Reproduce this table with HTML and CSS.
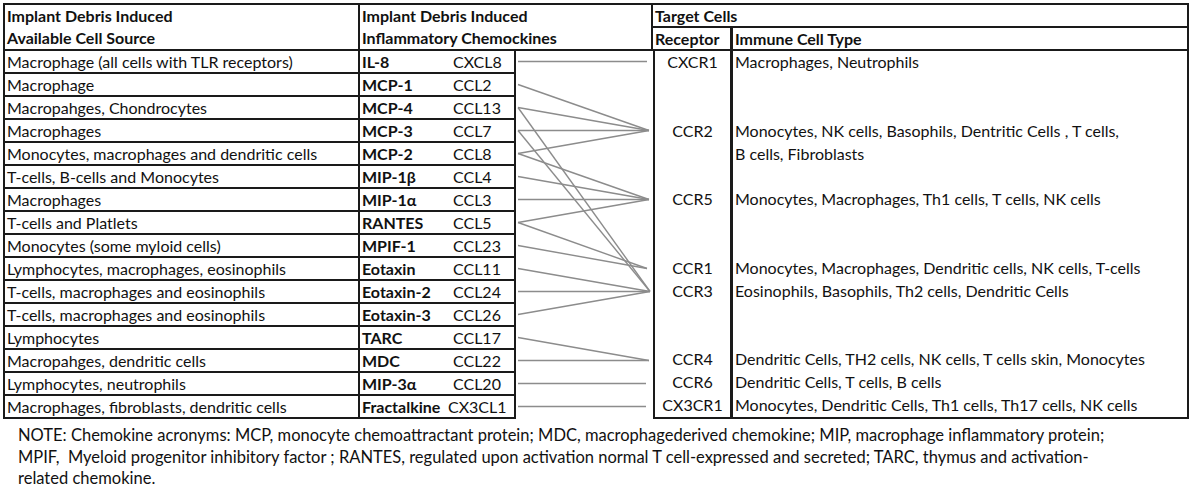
FILE: index.html
```html
<!DOCTYPE html>
<html lang="en">
<head>
    <meta charset="UTF-8">
    <title>Implant Debris Induced Chemokines</title>
    <link rel="stylesheet" href="styles.css">
</head>
<body>
    <div class="chart">
        <div class="hd hd-src">Implant Debris Induced<br>Available Cell Source</div>
        <div class="hd hd-chem">Implant Debris Induced<br>Inflammatory Chemockines</div>
        <div class="hd hd-target">Target Cells</div>
        <div class="hd hd-rec">Receptor</div>
        <div class="hd hd-imm">Immune Cell Type</div>

        <div class="src">Macrophage (all cells with TLR receptors)</div>
        <div class="chem"><b>IL-8</b><span>CXCL8</span></div>
        <div class="src">Macrophage</div>
        <div class="chem"><b>MCP-1</b><span>CCL2</span></div>
        <div class="src">Macropahges, Chondrocytes</div>
        <div class="chem"><b>MCP-4</b><span>CCL13</span></div>
        <div class="src">Macrophages</div>
        <div class="chem"><b>MCP-3</b><span>CCL7</span></div>
        <div class="src">Monocytes, macrophages and dendritic cells</div>
        <div class="chem"><b>MCP-2</b><span>CCL8</span></div>
        <div class="src">T-cells, B-cells and Monocytes</div>
        <div class="chem"><b>MIP-1β</b><span>CCL4</span></div>
        <div class="src">Macrophages</div>
        <div class="chem"><b>MIP-1α</b><span>CCL3</span></div>
        <div class="src">T-cells and Platlets</div>
        <div class="chem"><b>RANTES</b><span>CCL5</span></div>
        <div class="src">Monocytes (some myloid cells)</div>
        <div class="chem"><b>MPIF-1</b><span>CCL23</span></div>
        <div class="src">Lymphocytes, macrophages, eosinophils</div>
        <div class="chem"><b>Eotaxin</b><span>CCL11</span></div>
        <div class="src">T-cells, macrophages and eosinophils</div>
        <div class="chem"><b>Eotaxin-2</b><span>CCL24</span></div>
        <div class="src">T-cells, macrophages and eosinophils</div>
        <div class="chem"><b>Eotaxin-3</b><span>CCL26</span></div>
        <div class="src">Lymphocytes</div>
        <div class="chem"><b>TARC</b><span>CCL17</span></div>
        <div class="src">Macropahges, dendritic cells</div>
        <div class="chem"><b>MDC</b><span>CCL22</span></div>
        <div class="src">Lymphocytes, neutrophils</div>
        <div class="chem"><b>MIP-3α</b><span>CCL20</span></div>
        <div class="src">Macrophages, fibroblasts, dendritic cells</div>
        <div class="chem chem-wide"><b>Fractalkine</b><span>CX3CL1</span></div>

        <!-- chemokine -> receptor links, one row = 23px -->
        <svg class="links" width="137" height="368" viewBox="0 0 137 368">
            <g stroke="#8c8c8c" stroke-width="1.4" fill="none">
                <line x1="2" y1="10.5" x2="131" y2="10.5"/>
                <line x1="2" y1="33.5" x2="133" y2="79.5"/>
                <line x1="2" y1="56.5" x2="133" y2="79.5"/>
                <line x1="2" y1="56.5" x2="134" y2="240.5"/>
                <line x1="2" y1="79.5" x2="133" y2="79.5"/>
                <line x1="2" y1="79.5" x2="134" y2="240.5"/>
                <line x1="2" y1="102.5" x2="133" y2="79.5"/>
                <line x1="2" y1="102.5" x2="133" y2="148.5"/>
                <line x1="2" y1="125.5" x2="133" y2="148.5"/>
                <line x1="2" y1="148.5" x2="133" y2="148.5"/>
                <line x1="2" y1="171.5" x2="133" y2="148.5"/>
                <line x1="2" y1="171.5" x2="131" y2="217.5"/>
                <line x1="2" y1="194.5" x2="131" y2="217.5"/>
                <line x1="2" y1="217.5" x2="134" y2="240.5"/>
                <line x1="2" y1="240.5" x2="134" y2="240.5"/>
                <line x1="2" y1="263.5" x2="134" y2="240.5"/>
                <line x1="2" y1="286.5" x2="133" y2="309.5"/>
                <line x1="2" y1="309.5" x2="133" y2="309.5"/>
                <line x1="2" y1="332.5" x2="130" y2="332.5"/>
                <line x1="2" y1="355.5" x2="130" y2="355.5"/>
            </g>
        </svg>

        <div class="targets">
            <div class="rec">CXCR1</div><div class="imm">Macrophages, Neutrophils</div>
            <div class="rec"></div><div class="imm"></div>
            <div class="rec"></div><div class="imm"></div>
            <div class="rec">CCR2</div><div class="imm">Monocytes, NK cells, Basophils, Dentritic Cells , T cells,</div>
            <div class="rec"></div><div class="imm">B cells, Fibroblasts</div>
            <div class="rec"></div><div class="imm"></div>
            <div class="rec">CCR5</div><div class="imm">Monocytes, Macrophages, Th1 cells, T cells, NK cells</div>
            <div class="rec"></div><div class="imm"></div>
            <div class="rec"></div><div class="imm"></div>
            <div class="rec">CCR1</div><div class="imm">Monocytes, Macrophages, Dendritic cells, NK cells, T-cells</div>
            <div class="rec">CCR3</div><div class="imm">Eosinophils, Basophils, Th2 cells, Dendritic Cells</div>
            <div class="rec"></div><div class="imm"></div>
            <div class="rec"></div><div class="imm"></div>
            <div class="rec">CCR4</div><div class="imm">Dendritic Cells, TH2 cells, NK cells, T cells skin, Monocytes</div>
            <div class="rec">CCR6</div><div class="imm">Dendritic Cells, T cells, B cells</div>
            <div class="rec">CX3CR1</div><div class="imm">Monocytes, Dendritic Cells, Th1 cells, Th17 cells, NK cells</div>
        </div>
    </div>

    <p class="note">NOTE: Chemokine acronyms: MCP, monocyte chemoattractant protein; MDC, macrophagederived chemokine; MIP, macrophage inflammatory protein;<br>MPIF,&nbsp; Myeloid progenitor inhibitory factor ; RANTES, regulated upon activation normal T cell-expressed and secreted; TARC, thymus and activation-<br>related chemokine.</p>
</body>
</html>
```

FILE: styles.css
```css
* {
    box-sizing: border-box;
}
body {
    margin: 0;
    padding: 3px;
    font-family: Lato, "Liberation Sans", sans-serif;
    font-size: 16px;
    color: #111;
    background: #fff;
}
.chart {
    display: grid;
    grid-template-columns: 355px 156px 137px 80px 456px;
    grid-template-rows: repeat(18, 23px);
    width: max-content;
    border-top: 2px solid #1a1a1a;
    border-left: 2px solid #1a1a1a;
}
.hd {
    font-weight: 700;
    line-height: 22px;
    padding: 0 2px;
    border-right: 2px solid #1a1a1a;
    border-bottom: 2px solid #1a1a1a;
}
.hd-src {
    grid-column: 1;
    grid-row: 1 / 3;
}
.hd-chem {
    grid-column: 2 / 4;
    grid-row: 1 / 3;
}
.hd-target {
    grid-column: 4 / 6;
    grid-row: 1;
}
.hd-rec {
    grid-column: 4;
    grid-row: 2;
    border-right-width: 3px;
}
.hd-imm {
    grid-column: 5;
    grid-row: 2;
}
.src, .chem {
    line-height: 21px;
    padding: 0 2px;
    border-right: 2px solid #1a1a1a;
    border-bottom: 2px solid #1a1a1a;
    white-space: nowrap;
}
.src {
    grid-column: 1;
}
.chem {
    grid-column: 2;
    display: flex;
}
.chem b {
    width: 91px;
}
.chem-wide b {
    width: 86px;
}
.links {
    grid-column: 3;
    grid-row: 3 / 19;
    display: block;
}
.targets {
    grid-column: 4 / 6;
    grid-row: 3 / 19;
    display: grid;
    grid-template-columns: 80px 1fr;
    grid-template-rows: repeat(16, 1fr);
    border-right: 2px solid #1a1a1a;
    border-bottom: 2px solid #1a1a1a;
}
.rec {
    text-align: center;
    border-left: 2px solid #1a1a1a;
    border-right: 3px solid #1a1a1a;
    line-height: 22px;
}
.imm {
    padding-left: 2px;
    line-height: 22px;
    white-space: nowrap;
}
.note {
    margin: 6px 0 0 15px;
    font-size: 16.5px;
    line-height: 21.5px;
}
```
